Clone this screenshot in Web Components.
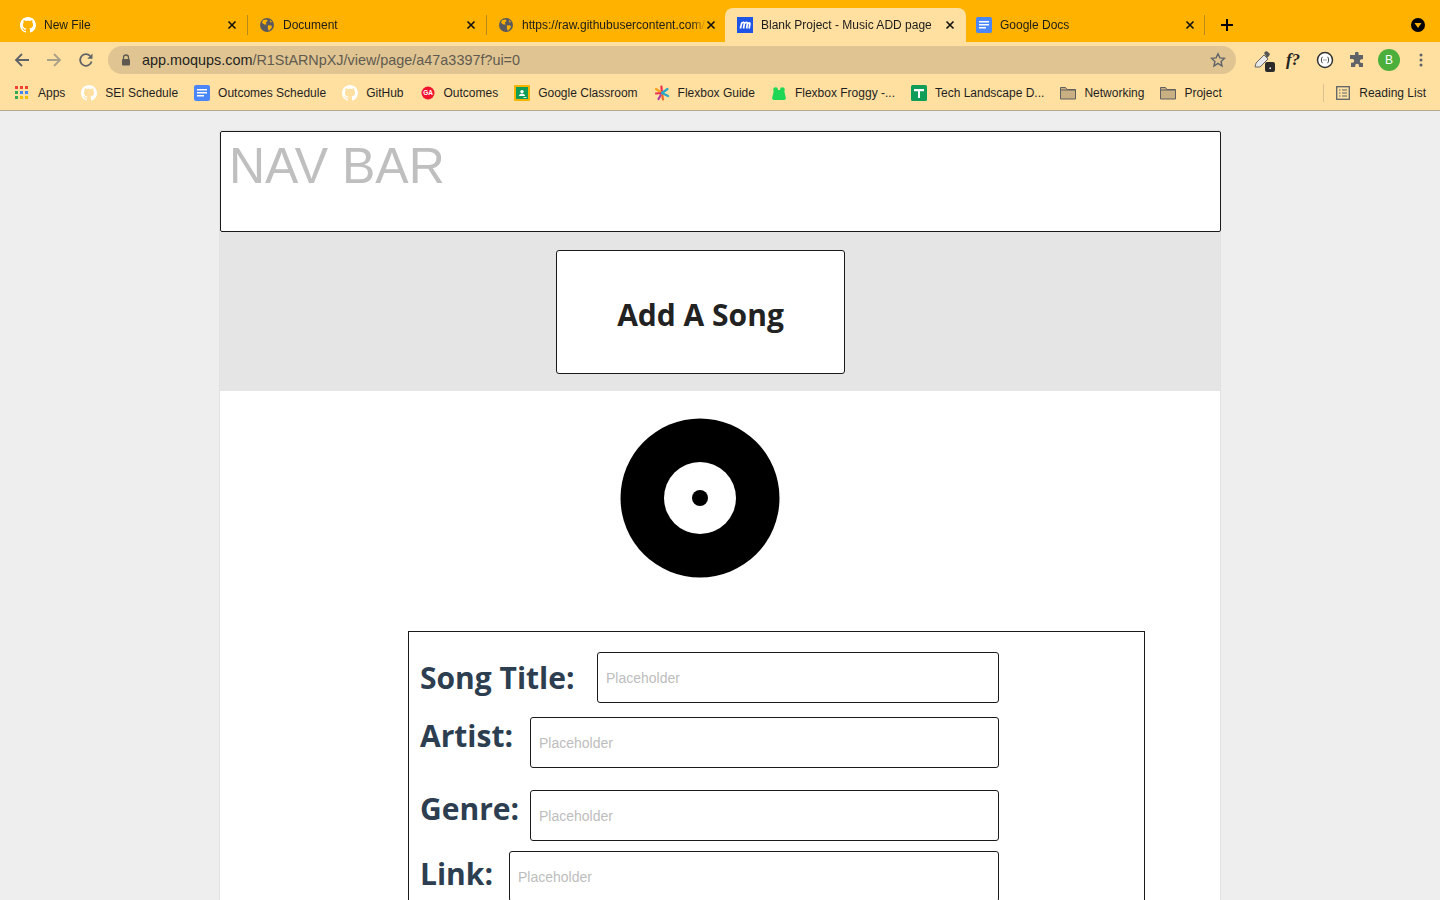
<!DOCTYPE html>
<html>
<head>
<meta charset="utf-8">
<title>Blank Project - Music ADD page</title>
<style>
  html, body { margin: 0; height: 100%; overflow: hidden; background: #eeeeee; }
  body { display: flex; flex-direction: column; height: 900px; font-family: "Liberation Sans", Arial, sans-serif; }
</style>
</head>
<body>
<browser-chrome></browser-chrome>
<mock-page></mock-page>

<script>
const GITHUB = `<svg width="16" height="16" viewBox="0 0 16 16"><path fill="#fff" d="M8 0C3.6 0 0 3.6 0 8c0 3.5 2.3 6.5 5.5 7.6.4.1.5-.2.5-.4v-1.4c-2.2.5-2.7-1-2.7-1-.4-.9-.9-1.2-.9-1.2-.7-.5.1-.5.1-.5.8.1 1.2.8 1.2.8.7 1.2 1.9.9 2.3.7.1-.5.3-.9.5-1.1-1.8-.2-3.6-.9-3.6-4 0-.9.3-1.6.8-2.1-.1-.2-.4-1 .1-2.1 0 0 .7-.2 2.2.8.6-.2 1.3-.3 2-.3s1.4.1 2 .3c1.5-1 2.2-.8 2.2-.8.4 1.1.2 1.9.1 2.1.5.6.8 1.3.8 2.1 0 3.1-1.9 3.7-3.7 3.9.3.3.6.8.6 1.5v2.2c0 .2.1.5.6.4C13.7 14.5 16 11.5 16 8c0-4.4-3.6-8-8-8z"/></svg>`;
const GLOBE = `<svg width="16" height="16" viewBox="0 0 16 16"><circle cx="8" cy="8" r="7" fill="#5a5a5e"/><path fill="#ffb300" d="M4 3.2 7.6 2.4 8.6 4 6.8 5.6 7.6 7.4 5.4 7.6 3 5.8zM9 8.2l3.4.4.6 1.6-2.6 3.2-1-.2-.6-3zM11 2.8l2 2.2-1.6.4z"/></svg>`;
const DOCS = `<svg width="16" height="16" viewBox="0 0 16 16"><rect width="16" height="16" rx="2" fill="#4a86f7"/><path fill="#fff" d="M3 4h10v1.5H3zM3 7h10v1.5H3zM3 10h7v1.5H3z"/></svg>`;
const MOQUPS = `<svg width="16" height="16" viewBox="0 0 16 16"><rect width="16" height="16" fill="#1f55e6"/><path fill="none" stroke="#fff" stroke-width="1.7" d="M3.4 11.5 4.8 5.6M4.6 6.6C5.6 5 7.6 5 7.3 7L6.5 11.5M7.4 6.6C8.6 5 10.8 5 10.4 7L9.6 11.5"/><path fill="none" stroke="#fff" stroke-width="1.7" d="M10.4 7c1-1.6 2.8-1.6 2.5 0l-.8 4.5"/></svg>`;
const FOLDER = `<svg width="16" height="16" viewBox="0 0 16 16"><path fill="#c9b083" stroke="#5f5f5f" stroke-width="1" d="M.5 2.5h5l1.5 2h8.5v9.5H.5z"/><path fill="none" stroke="#5f5f5f" d="M.5 5h15"/></svg>`;

const BOOKMARKS = [
  { label: 'Apps', w: 16, gap: 7, icon: `<svg width="14" height="14" viewBox="0 0 14 14"><path fill="#ea4335" d="M0 0h3v3H0zM5 0h3v3H5z"/><path fill="#ea4335" d="M10 0h3v3h-3z"/><path fill="#34a853" d="M0 5h3v3H0z"/><path fill="#4285f4" d="M5 5h3v3H5zM10 5h3v3h-3z"/><path fill="#34a853" d="M0 10h3v3H0z"/><path fill="#fbbc05" d="M5 10h3v3H5zM10 10h3v3h-3z"/></svg>` },
  { label: 'SEI Schedule', icon: GITHUB },
  { label: 'Outcomes Schedule', icon: DOCS },
  { label: 'GitHub', icon: GITHUB },
  { label: 'Outcomes', icon: `<svg width="16" height="16" viewBox="0 0 16 16"><circle cx="8" cy="8" r="6.5" fill="#f0142f"/><text x="8" y="10.4" font-size="6.5" font-weight="700" text-anchor="middle" fill="#fff" font-family="Liberation Sans">GA</text></svg>` },
  { label: 'Google Classroom', icon: `<svg width="16" height="16" viewBox="0 0 16 16"><rect width="16" height="16" rx="1" fill="#f4b400"/><rect x="2" y="2" width="12" height="12" fill="#0f9d58"/><circle cx="8" cy="6.6" r="1.7" fill="#fff"/><path fill="#fff" d="M4.8 11c.4-1.6 1.7-2.2 3.2-2.2s2.8.6 3.2 2.2z"/><path fill="#fff" d="M9.5 12h3v.8h-3z"/></svg>` },
  { label: 'Flexbox Guide', icon: `<svg width="16" height="16" viewBox="0 0 16 16" stroke-width="2.2" stroke-linecap="round"><path stroke="#f02d4f" d="M8 8 7.4 1.5"/><path stroke="#f7a21b" d="M8 8 2 4"/><path stroke="#f02d4f" d="M8 8 2 8.5"/><path stroke="#b03ca8" d="M8 8 4.5 14"/><path stroke="#f06a2d" d="M8 8 9 14.5"/><path stroke="#2aa6c9" d="M8 8 14 11"/><path stroke="#2aa6c9" d="M8 8 13.5 4"/></svg>` },
  { label: 'Flexbox Froggy -...', icon: `<svg width="16" height="16" viewBox="0 0 16 16"><circle cx="4.6" cy="4.6" r="2.4" fill="#1fd655"/><circle cx="11.4" cy="4.6" r="2.4" fill="#1fd655"/><path fill="#1fd655" d="M3 5h10l2 8.5-1.5 1.5h-11L1 13.500z"/></svg>` },
  { label: 'Tech Landscape D...', icon: `<svg width="16" height="16" viewBox="0 0 16 16"><rect width="16" height="16" rx="1.500" fill="#0f9d58"/><path fill="#fff" d="M3 4h10v2.200H9V13H7V6.200H3z"/></svg>` },
  { label: 'Networking', icon: FOLDER },
  { label: 'Project', icon: FOLDER }
];

class ChromeTab extends HTMLElement {
  constructor() {
    super();
    this.attachShadow({ mode: 'open' });
  }

  connectedCallback() {
    const active = this.hasAttribute('active');
    const sep = this.hasAttribute('sep');
    this.shadowRoot.innerHTML = `
      <style>
        :host {
          display: flex;
          align-items: center;
          box-sizing: border-box;
          height: 34px;
          flex: 0 0 auto;
          position: relative;
          color: #1c1c1c;
          font-size: 12px;
        }
        :host([active]) { background: #ffe0a0; border-radius: 8px 8px 0 0; }
        .icon { width: 16px; height: 16px; flex: none; display: block; }
        .title {
          flex: 1;
          min-width: 0;
          white-space: nowrap;
          overflow: hidden;
          margin-left: 8px;
          -webkit-mask-image: linear-gradient(to right, #000 calc(100% - 14px), transparent);
        }
        .close { width: 10px; height: 10px; flex: none; display: block; }
        .sep {
          position: absolute;
          right: 0;
          top: 7px;
          width: 1px;
          height: 20px;
          background: #b88a1e;
          display: ${sep ? 'block' : 'none'};
        }
      </style>
      <span class="icon"><slot name="icon"></slot></span>
      <span class="title"><slot></slot></span>
      <svg class="close" viewBox="0 0 10 10"><path d="M1.500 1.500l7 7M8.500 1.500l-7 7" stroke="#111" stroke-width="1.600" fill="none"/></svg>
      <span class="sep"></span>
    `;
  }
}
customElements.define('chrome-tab', ChromeTab);

class TabStrip extends HTMLElement {
  constructor() {
    super();
    this.attachShadow({ mode: 'open' });
    this.shadowRoot.innerHTML = `
      <style>
        :host {
          display: flex;
          align-items: flex-end;
          height: 42px;
          flex: none;
          background: #ffb300;
          position: relative;
        }
        chrome-tab { padding: 0 11px 0 20px; width: 248px; box-sizing: border-box; }
        .t2 { width: 239px; padding: 0 11px 0 11px; }
        .t3 { width: 238px; padding: 0 9px 0 11px; }
        .t4 { width: 241px; padding: 0 11px 0 12px; }
        .t5 { width: 239px; padding: 0 10px 0 10px; }
        .new { margin-left: 15px; height: 34px; display: flex; align-items: center; }
        .profile { position: absolute; right: 15px; top: 18px; }
        [slot=icon] svg, span[slot=icon] { display: block; }
      </style>
      <chrome-tab sep><span slot="icon">${GITHUB}</span>New File</chrome-tab>
      <chrome-tab class="t2" sep><span slot="icon">${GLOBE}</span>Document</chrome-tab>
      <chrome-tab class="t3"><span slot="icon">${GLOBE}</span>https://raw.githubusercontent.com/</chrome-tab>
      <chrome-tab class="t4" active><span slot="icon">${MOQUPS}</span>Blank Project - Music ADD page</chrome-tab>
      <chrome-tab class="t5" sep><span slot="icon">${DOCS}</span>Google Docs</chrome-tab>
      <span class="new"><svg width="14" height="14" viewBox="0 0 14 14"><path d="M7 1v12M1 7h12" stroke="#000" stroke-width="2" fill="none"/></svg></span>
      <svg class="profile" width="14" height="14" viewBox="0 0 14 14"><circle cx="7" cy="7" r="7" fill="#000"/><path d="M3.500 5h7L7 10z" fill="#ffb300"/></svg>
    `;
  }
}
customElements.define('tab-strip', TabStrip);

class UrlBar extends HTMLElement {
  constructor() {
    super();
    this.attachShadow({ mode: 'open' });
    this.shadowRoot.innerHTML = `
      <style>
        :host {
          display: flex;
          align-items: center;
          flex: none;
          height: 36px;
          background: #ffe0a0;
          padding: 0 0 0 14px;
        }
        .nav { display: flex; align-items: center; gap: 16px; }
        .nav svg { display: block; }
        .pill {
          margin-left: 14px;
          width: 1128px;
          height: 28px;
          border-radius: 14px;
          background: #e0c592;
          display: flex;
          align-items: center;
          box-sizing: border-box;
          padding: 0 10px 0 13px;
          font-size: 14.4px;
          color: #5f5a50;
        }
        .lock { margin-right: 11px; display: block; }
        .host { color: #1f1f1f; }
        .url { flex: 1; white-space: nowrap; }
        .ext { display: flex; align-items: center; margin-left: 14px; }
        .ext > * { flex: none; }
        .avatar {
          width: 22px;
          height: 22px;
          border-radius: 50%;
          background: #4caf3c;
          color: #fff;
          font-size: 12px;
          display: flex;
          align-items: center;
          justify-content: center;
        }
        .fq { font: italic 700 17px "Liberation Serif", serif; color: #222; width: 18px; text-align: center; }
      </style>
      <div class="nav">
        <svg width="16" height="16" viewBox="0 0 16 16"><path d="M15 8H2M8 2 2 8l6 6" stroke="#5f6368" stroke-width="1.800" fill="none"/></svg>
        <svg width="16" height="16" viewBox="0 0 16 16"><path d="M1 8h13M8 2l6 6-6 6" stroke="#a8a089" stroke-width="1.800" fill="none"/></svg>
        <svg width="16" height="16" viewBox="0 0 16 16"><path d="M13.600 9.500A5.800 5.800 0 1 1 12.200 4" stroke="#5f6368" stroke-width="1.800" fill="none"/><path d="M14.500 1.500v5.200H9.300z" fill="#5f6368"/></svg>
      </div>
      <div class="pill">
        <svg class="lock" width="10" height="12" viewBox="0 0 10 12"><path d="M2.500 5V3.500a2.500 2.500 0 0 1 5 0V5" stroke="#5f5a50" stroke-width="1.300" fill="none"/><rect x="1" y="5" width="8" height="6.500" rx="1" fill="#5f5a50"/></svg>
        <span class="url"><span class="host">app.moqups.com</span>/R1StARNpXJ/view/page/a47a3397f?ui=0</span>
        <svg width="16" height="16" viewBox="0 0 16 16"><path d="M8 1.800l1.900 4.100 4.500.5-3.300 3.100.9 4.500L8 11.300l-4 2.700.9-4.500L1.600 6.400l4.500-.5z" fill="none" stroke="#5f6368" stroke-width="1.400"/></svg>
      </div>
      <div class="ext">
        <svg width="24" height="24" viewBox="0 0 24 24" style="margin-left:1px"><path d="M4 19l1-4 8-8 4 4-8 8z" fill="#e8e8e8" stroke="#666"/><path d="M13 5l2-2 2 1 2 2-1 2-2 2z" fill="#555"/><rect x="14" y="14" width="10" height="10" rx="2" fill="#2a2a2a"/><rect x="18.500" y="19.500" width="1.500" height="1.500" fill="#fff"/></svg>
        <span class="fq" style="margin-left:9px">f?</span>
        <svg width="18" height="18" viewBox="0 0 18 18" style="margin-left:14px"><circle cx="9" cy="9" r="7.500" fill="#fff" stroke="#333" stroke-width="1.500"/><path d="M6.500 5.800C5 7 5 11 6.500 12.200M11.500 5.800c1.500 1.200 1.500 5.200 0 6.400" stroke="#444" fill="none"/><path d="M7.500 9h3" stroke="#444" stroke-dasharray="1 1"/></svg>
        <svg width="16" height="16" viewBox="0 0 16 16" style="margin-left:15px"><path fill="#5f6368" d="M6 1.500a1.800 1.800 0 0 1 3.600 0V3H14v4.200h-1.300a1.900 1.900 0 0 0 0 3.800H14v4H10v-1.300a1.900 1.900 0 0 0-3.800 0V15H2v-4.300h1.300a1.900 1.900 0 0 0 0-3.800H1V3h5z"/></svg>
        <span class="avatar" style="margin-left:13px">B</span>
        <svg width="4" height="14" viewBox="0 0 4 14" style="margin-left:19px"><circle cx="2" cy="2" r="1.500" fill="#5f6368"/><circle cx="2" cy="7" r="1.500" fill="#5f6368"/><circle cx="2" cy="12" r="1.500" fill="#5f6368"/></svg>
      </div>
    `;
  }
}
customElements.define('url-bar', UrlBar);

class BookmarkItem extends HTMLElement {
  constructor() {
    super();
    this.attachShadow({ mode: 'open' });
    this.shadowRoot.innerHTML = `
      <style>
        :host {
          display: inline-flex;
          align-items: center;
          gap: 8px;
          font-size: 12px;
          color: #1f1f1f;
          white-space: nowrap;
        }
        .i { width: 16px; height: 16px; display: flex; align-items: center; justify-content: center; }
      </style>
      <span class="i"><slot name="icon"></slot></span>
      <slot></slot>
    `;
  }
}
customElements.define('bookmark-item', BookmarkItem);

class BookmarkBar extends HTMLElement {
  constructor() {
    super();
    this.attachShadow({ mode: 'open' });
    const items = BOOKMARKS.map(b =>
      `<bookmark-item><span slot="icon" style="display:flex">${b.icon}</span>${b.label}</bookmark-item>`
    ).join('');
    this.shadowRoot.innerHTML = `
      <style>
        :host {
          display: flex;
          align-items: center;
          flex: none;
          box-sizing: border-box;
          height: 33px;
          padding: 0 14px 3px 14px;
          background: #ffe0a0;
          border-bottom: 1px solid #b5a98f;
        }
        .items { display: flex; align-items: center; gap: 16px; flex: 1; }
        .reading { display: flex; align-items: center; border-left: 1px solid #d9c28f; height: 18px; padding-left: 11px; }
      </style>
      <div class="items">${items}</div>
      <div class="reading">
        <bookmark-item><svg slot="icon" width="14" height="14" viewBox="0 0 14 14"><rect x=".7" y=".7" width="12.600" height="12.600" fill="none" stroke="#5f6368" stroke-width="1.300"/><path d="M3 4h1.500M6 4h5M3 7h1.500M6 7h5M3 10h1.500M6 10h5" stroke="#5f6368" stroke-width="1.200"/></svg>Reading List</bookmark-item>
      </div>
    `;
  }
}
customElements.define('bookmark-bar', BookmarkBar);

class BrowserChrome extends HTMLElement {
  constructor() {
    super();
    this.attachShadow({ mode: 'open' });
    this.shadowRoot.innerHTML = `
      <style>
        :host { display: block; flex: none; }
      </style>
      <tab-strip></tab-strip>
      <url-bar></url-bar>
      <bookmark-bar></bookmark-bar>
    `;
  }
}
customElements.define('browser-chrome', BrowserChrome);

class VinylDisc extends HTMLElement {
  constructor() {
    super();
    this.attachShadow({ mode: 'open' });
    this.shadowRoot.innerHTML = `
      <style>
        :host { display: block; width: 160px; height: 160px; }
        svg { display: block; }
      </style>
      <svg width="160" height="160" viewBox="0 0 160 160">
        <circle cx="80" cy="80" r="79.500" fill="#000"/>
        <circle cx="80" cy="80" r="36" fill="#fff"/>
        <circle cx="80" cy="80" r="8" fill="#000"/>
      </svg>
    `;
  }
}
customElements.define('vinyl-disc', VinylDisc);

class FormRow extends HTMLElement {
  constructor() {
    super();
    this.attachShadow({ mode: 'open' });
    this.shadowRoot.innerHTML = `
      <style>
        :host {
          display: flex;
          align-items: center;
          justify-content: space-between;
          width: 579px;
          height: 51px;
        }
        .label {
          font: 700 30px "Open Sans", sans-serif;
          color: #2c3e50;
          white-space: nowrap;
          line-height: 40px;
        }
        .field {
          box-sizing: border-box;
          height: 51px;
          background: #fff;
          border: 1px solid #1a1a1a;
          border-radius: 3px;
          padding-left: 8px;
          display: flex;
          align-items: center;
          font: 14px "Liberation Sans", sans-serif;
          color: #bdbdbd;
        }
      </style>
      <span class="label" part="label"><slot></slot></span>
      <div class="field" part="field">Placeholder</div>
    `;
  }

  connectedCallback() {
    this.shadowRoot.querySelector('.field').style.width = this.getAttribute('field-width') + 'px';
    this.shadowRoot.querySelector('.label').style.transform = `translateY(${this.getAttribute('lift') || 0}px)`;
  }
}
customElements.define('form-row', FormRow);

class SongForm extends HTMLElement {
  constructor() {
    super();
    this.attachShadow({ mode: 'open' });
    this.shadowRoot.innerHTML = `
      <style>
        :host {
          display: block;
          box-sizing: border-box;
          width: 737px;
          height: 320px;
          border: 1px solid #1a1a1a;
          padding: 20px 0 0 11px;
        }
        form-row + form-row { margin-top: 14px; }
        .genre { margin-top: 22px !important; }
        .link { margin-top: 10px !important; }
      </style>
      <form-row field-width="402">Song Title:</form-row>
      <form-row field-width="469" lift="-7">Artist:</form-row>
      <form-row class="genre" field-width="469" lift="-7">Genre:</form-row>
      <form-row class="link" field-width="490" lift="-3">Link:</form-row>
    `;
  }
}
customElements.define('song-form', SongForm);

class MockPage extends HTMLElement {
  constructor() {
    super();
    this.attachShadow({ mode: 'open' });
    this.shadowRoot.innerHTML = `
      <style>
        :host {
          display: block;
          flex: 1;
          min-height: 0;
          overflow: hidden;
          background: #eeeeee;
          padding: 20px 0 0 220px;
        }
        .canvas {
          width: 1000px;
          background: #fff;
          box-shadow: 0 0 0 1px #e2e2e2;
          height: 900px;
        }
        .nav {
          box-sizing: border-box;
          width: 1001px;
          height: 101px;
          background: #fff;
          border: 1px solid #1a1a1a;
          border-radius: 2px;
          padding: 4px 0 0 8px;
          font: 400 50px/60px "Liberation Sans", sans-serif;
          color: #bfbfbf;
        }
        .band {
          height: 159px;
          background: #e5e5e5;
          box-sizing: border-box;
          padding: 18px 0 0 336px;
        }
        .add {
          box-sizing: border-box;
          width: 289px;
          height: 124px;
          background: #fff;
          border: 1px solid #1a1a1a;
          border-radius: 3px;
          display: flex;
          align-items: center;
          justify-content: center;
          font: 700 30px "Open Sans", sans-serif;
          color: #222;
          padding-top: 4px;
        }
        .disc { padding: 27px 0 0 400px; height: 213px; box-sizing: border-box; }
        .form-wrap { margin-left: 188px; margin-top: 27px; }
      </style>
      <div class="canvas">
        <div class="nav">NAV BAR</div>
        <div class="band"><div class="add">Add A Song</div></div>
        <div class="disc"><vinyl-disc></vinyl-disc></div>
        <div class="form-wrap"><song-form></song-form></div>
      </div>
    `;
  }
}
customElements.define('mock-page', MockPage);
</script>
</body>
</html>
